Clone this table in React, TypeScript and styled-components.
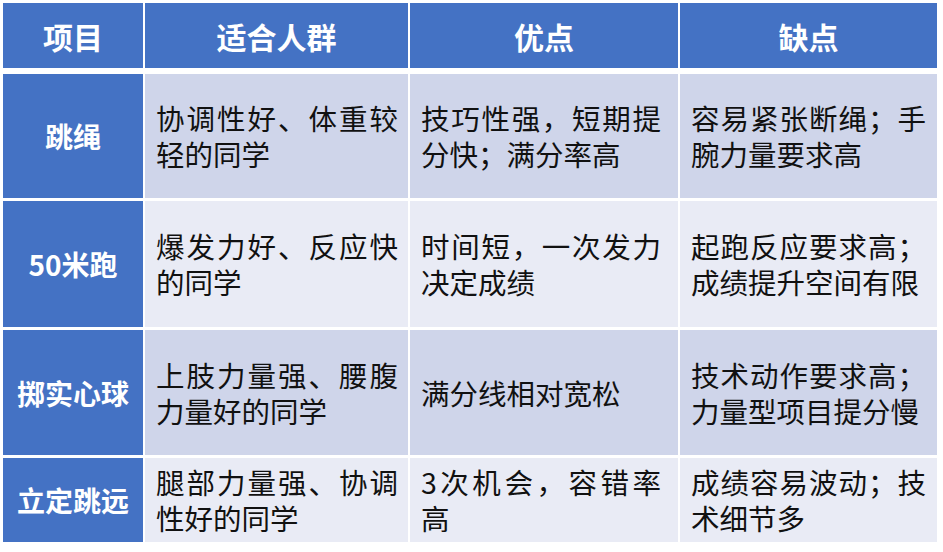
import React from "react";
import styled, { createGlobalStyle } from "styled-components";

const Global = createGlobalStyle`
  html, body { margin: 0; padding: 0; background: #ffffff; }
  body { font-family: "Noto Sans CJK SC", "Noto Sans", sans-serif; }
`;

const Page = styled.div`
  padding: 3px 0 0 3px;
  width: 943px;
  height: 552px;
  box-sizing: border-box;
  background: #ffffff;
`;

const Table = styled.div`
  display: flex;
  flex-direction: column;
  gap: 3px;
  width: 934px;
`;

const Row = styled.div<{ $h: number; $header?: boolean }>`
  display: grid;
  grid-template-columns: 140px 263px 268px 257px;
  column-gap: 2px;
  height: ${(p) => p.$h}px;
  margin-bottom: ${(p) => (p.$header ? 3 : 0)}px;
`;

const HeadCell = styled.div`
  background: #4472c4;
  color: #ffffff;
  font-weight: 700;
  font-size: 30px;
  display: flex;
  align-items: center;
  justify-content: center;
  line-height: 1;
`;

const NameCell = styled.div`
  background: #4472c4;
  color: #ffffff;
  font-weight: 700;
  font-size: 28px;
  display: flex;
  align-items: center;
  justify-content: center;
  line-height: 1;
`;

const BodyCell = styled.div<{ $odd: boolean; $pl: number; $pr: number }>`
  background: ${(p) => (p.$odd ? "#cfd5ea" : "#e9ebf5")};
  color: #111111;
  font-size: 28.5px;
  line-height: 36px;
  display: flex;
  align-items: center;
  padding: 0 ${(p) => p.$pr}px 0 ${(p) => p.$pl}px;
  box-sizing: border-box;
`;

const Text = styled.div`
  width: 100%;
  text-align: justify;
  text-justify: inter-character;
`;

const headers = ["项目", "适合人群", "优点", "缺点"];

const rows = [
  { h: 124, name: "跳绳", cells: ["协调性好、体重较轻的同学", "技巧性强，短期提分快；满分率高", "容易紧张断绳；手腕力量要求高"] },
  { h: 126, name: "50米跑", cells: ["爆发力好、反应快的同学", "时间短，一次发力决定成绩", "起跑反应要求高；成绩提升空间有限"] },
  { h: 125, name: "掷实心球", cells: ["上肢力量强、腰腹力量好的同学", "满分线相对宽松", "技术动作要求高；力量型项目提分慢"] },
  { h: 84, name: "立定跳远", cells: ["腿部力量强、协调性好的同学", "3次机会，容错率高", "成绩容易波动；技术细节多"] },
];

const pads = [
  { l: 11, r: 10 },
  { l: 11, r: 17 },
  { l: 11, r: 11 },
];

export default function App() {
  return (
    <>
      <Global />
      <Page>
        <Table>
          <Row $h={65} $header>
            {headers.map((h) => (
              <HeadCell key={h}>{h}</HeadCell>
            ))}
          </Row>
          {rows.map((r, i) => (
            <Row key={r.name} $h={r.h}>
              <NameCell>{r.name}</NameCell>
              {r.cells.map((c, j) => (
                <BodyCell key={j} $odd={i % 2 === 0} $pl={pads[j].l} $pr={pads[j].r}>
                  <Text>{c}</Text>
                </BodyCell>
              ))}
            </Row>
          ))}
        </Table>
      </Page>
    </>
  );
}
